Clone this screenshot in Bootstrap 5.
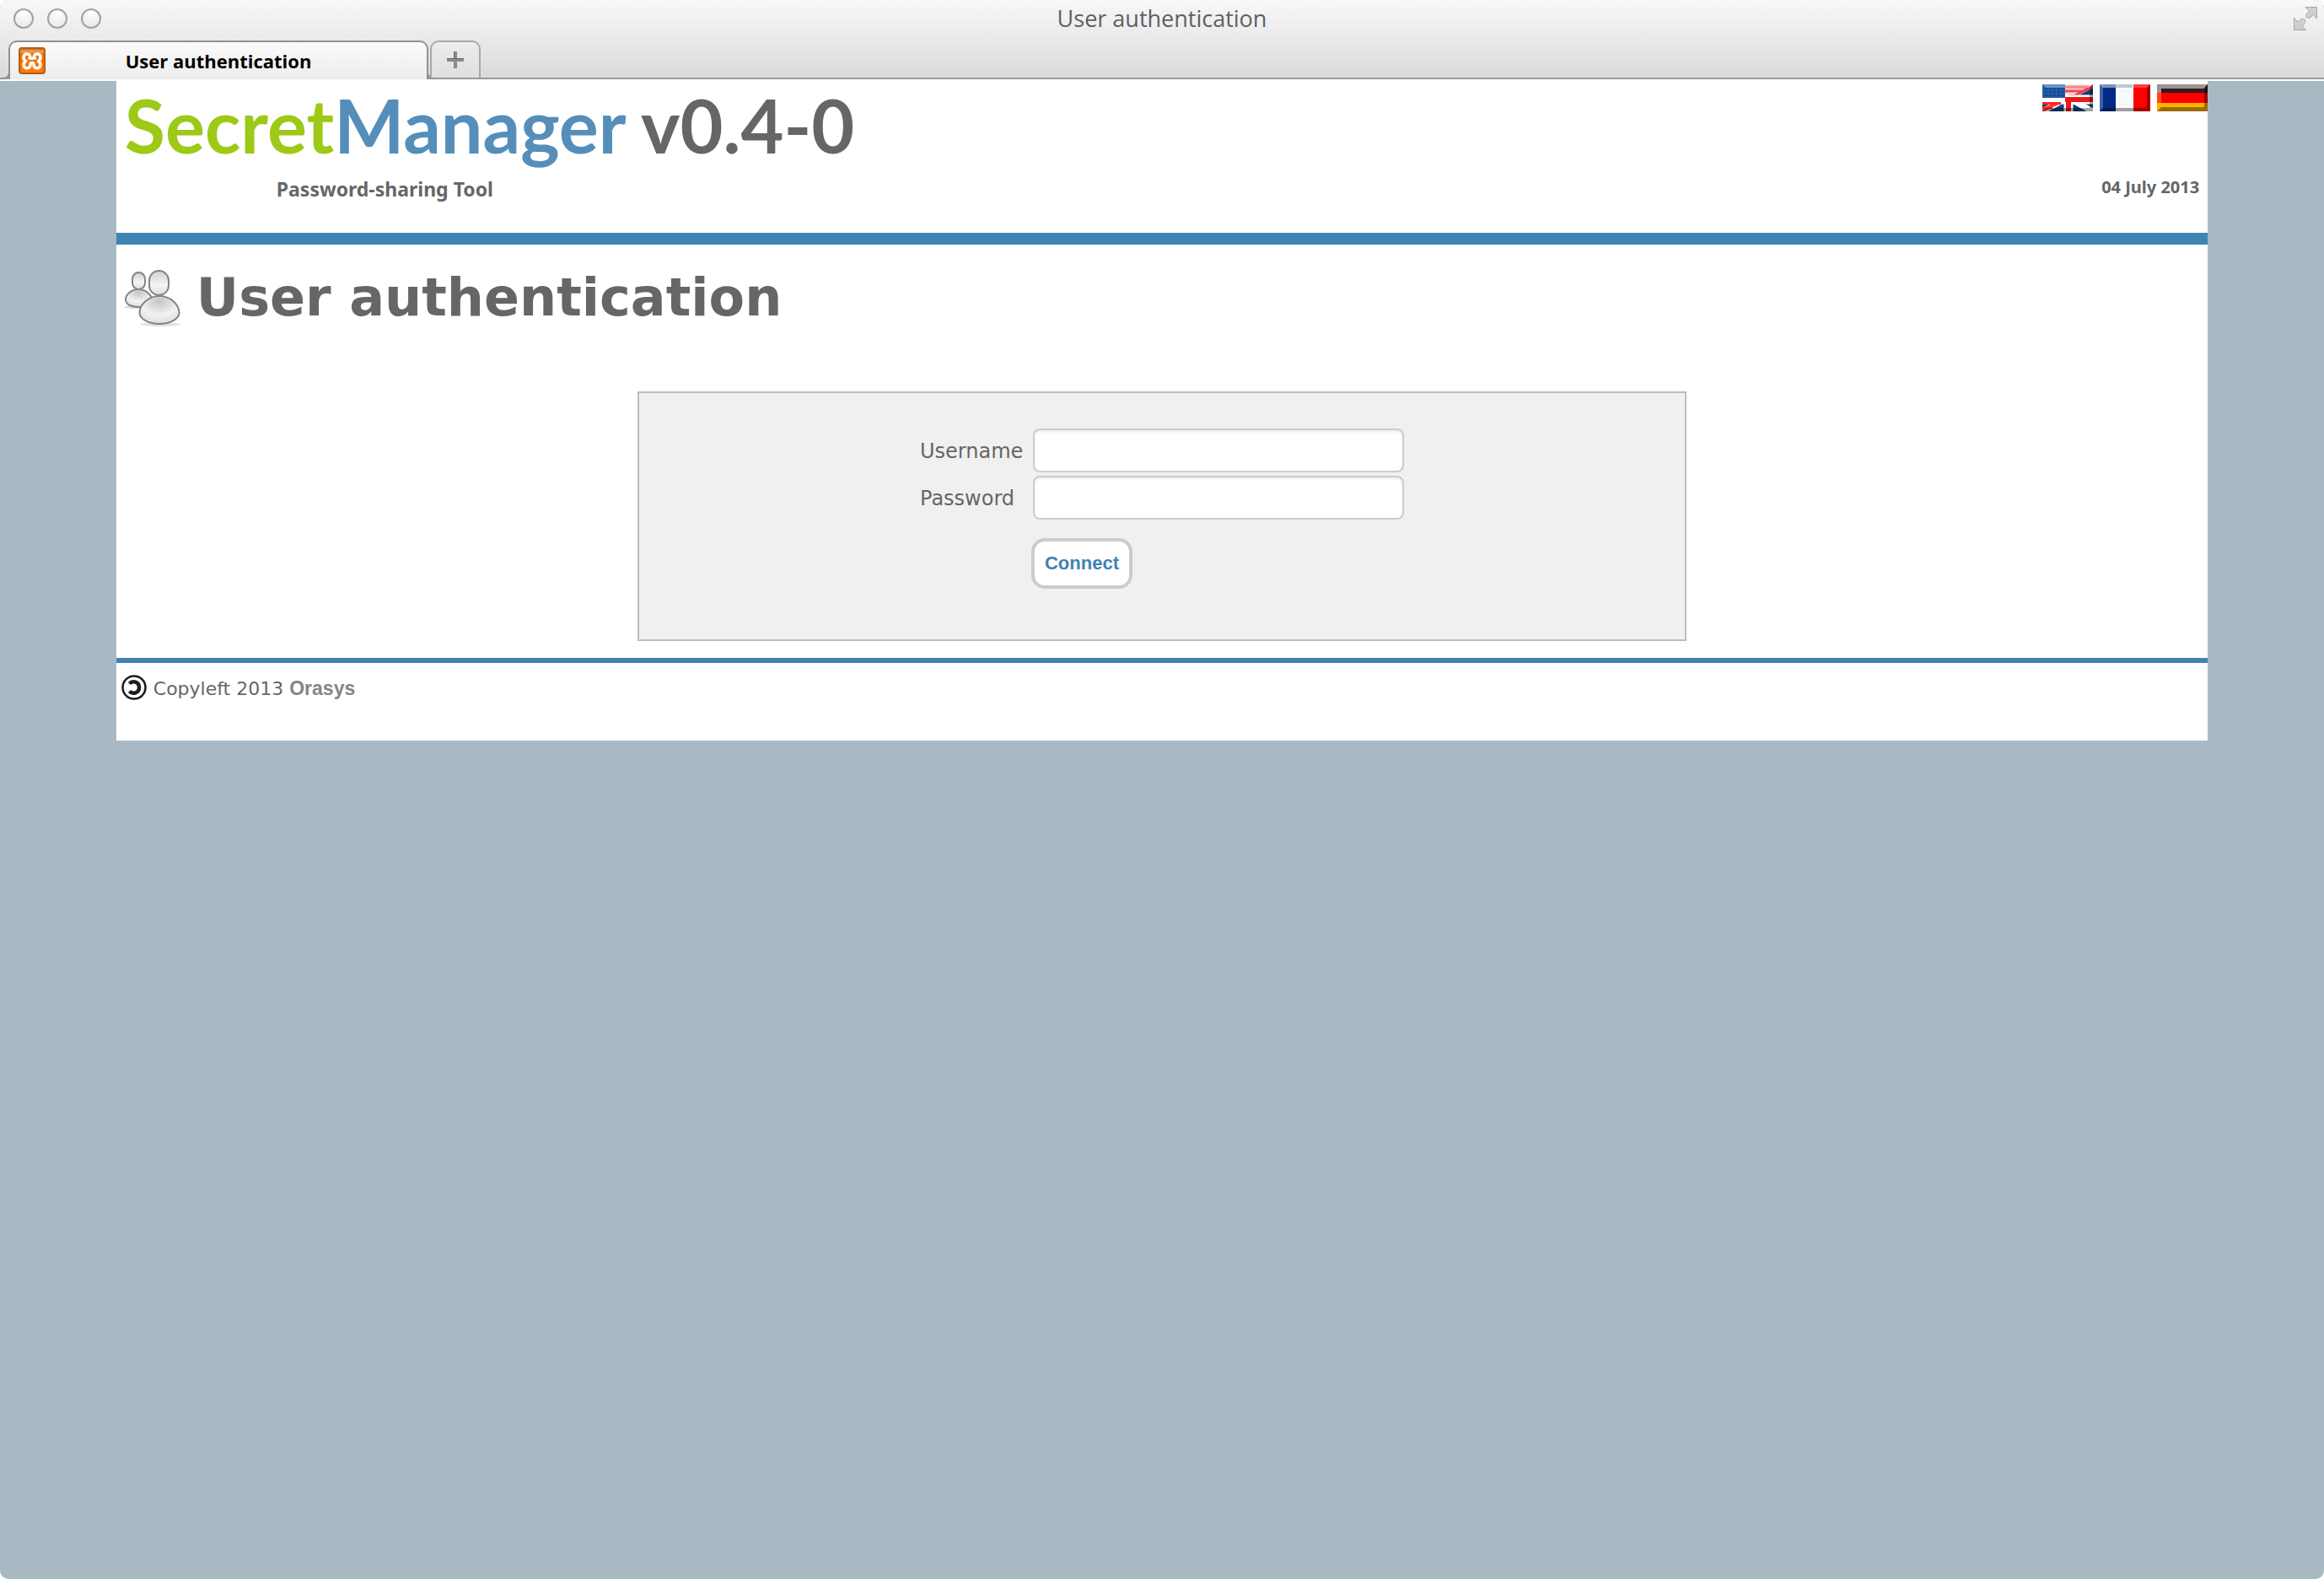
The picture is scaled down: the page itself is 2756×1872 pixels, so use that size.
<!DOCTYPE html>
<html lang="en">
<head>
<meta charset="utf-8">
<meta name="viewport" content="width=device-width, initial-scale=1">
<title>User authentication</title>
<link href="https://cdn.jsdelivr.net/npm/bootstrap@5.3.0/dist/css/bootstrap.min.css" rel="stylesheet">
<style>
  :root { --sm-blue: #3f83b3; --sm-text: #666; --sm-line: #ccc; }
  body { background: #fff; color: var(--sm-text); font-family: "DejaVu Sans", sans-serif; font-size: 24px; line-height: 32px; }
  a { text-decoration: none; }
  svg { display: block; flex: none; }

  /* browser window */
  .window-frame { border-radius: 10px; overflow: hidden; background: #a8b9c3; }
  .window-bar { height: 96px; background: linear-gradient(#f8f8f8, #e9e9e9 50%, #dadada 92px, #8f8f8f 92px, #a9a9a9 94px, #f6f6f6 94px, #fff); font-family: "Open Sans", sans-serif; }
  .title-row { height: 48px; padding: 0 8px 4px 16px; }
  .side-zone { flex: 1 1 0; }
  .dot-btn { width: 24px; height: 24px; padding: 0; border: 2px solid #a2a2a2; border-radius: 50%; background: radial-gradient(circle at 50% 20%, #fff, #f1f1f1 50%, #e6e6e6); }
  .window-title { color: #606060; font-size: 27px; line-height: 36px; }
  .expand-btn { padding: 0; border: 0; background: none; }
  .tab-strip { height: 48px; border: 0; padding-left: 10px; gap: 2px; flex-wrap: nowrap; }
  .tab-strip .nav-link { position: relative; border: 2px solid #929292; border-bottom: 0; border-radius: 10px 10px 0 0; margin: 0; padding: 0; color: #000; }
  .tab-strip .page-tab { width: 498px; height: 46px; padding: 0 10px; background: linear-gradient(#fbfbfb, #ececec); font-weight: 700; font-size: 22px; }
  .tab-strip .page-tab::before, .tab-strip .page-tab::after { content: ""; position: absolute; bottom: 0; width: 12px; height: 12px; border-bottom: 2px solid #929292; }
  .tab-strip .page-tab::before { left: -12px; border-right: 2px solid #929292; border-bottom-right-radius: 8px; }
  .tab-strip .page-tab::after { right: -12px; border-left: 2px solid #929292; border-bottom-left-radius: 8px; }
  .tab-strip .plus-tab { width: 60px; height: 44px; border-color: #a9a9a9; background: linear-gradient(#ececec, #dfdfdf); }
  .tab-label { padding-right: 32px; }

  /* page sheet */
  .sheet { width: 90%; background: #fff; }
  .site-head { border-bottom: 14px solid var(--sm-blue); min-height: 194px; }
  .brand-line { padding: 4px 0 0 10px; font-family: Lato, sans-serif; font-weight: 700; font-size: 88px; line-height: 96px; color: var(--sm-text); }
  .brand-green { color: #9dc917; }
  .brand-blue { color: #558eb9; }
  .tagline { margin: 10px 0 0 190px; font-family: "Noto Sans", sans-serif; font-weight: 700; font-size: 23px; line-height: 36px; }
  .flags { gap: 8px; padding-top: 4px; }
  .today { padding: 72px 10px 0 0; font-family: "Noto Sans", sans-serif; font-weight: 700; font-size: 20px; line-height: 36px; }
  .page-title { padding: 23px 10px 0; gap: 17px; }
  .page-title h1 { margin: 0; font-size: 62px; line-height: 80px; font-weight: 700; color: var(--sm-text); }
  .login-box { width: 50.16%; min-height: 296px; margin-top: 71px; padding: 42px 16px; background: #f0f0f0; border: 2px solid #bdbdbd; }
  .login-row { width: 578px; margin-bottom: 4px; padding-left: 2px; }
  .login-row label { width: 134px; padding-top: 2px; }
  .login-row .form-control { width: 440px; height: 52px; padding: 4px 10px; font-size: 24px; border: 2px solid var(--sm-line); border-radius: 8px; box-shadow: inset 0 2px 3px rgba(0,0,0,.08); }
  .connect-row { width: 578px; padding: 18px 0 0 134px; }
  .btn-connect { height: 60px; width: 120px; padding: 0; background: #fff; color: var(--sm-blue); border: 4px solid var(--sm-line); border-radius: 16px; font-family: "Liberation Sans", Arial, sans-serif; font-weight: 700; font-size: 22px; line-height: 32px; }
  .site-foot { margin-top: 20px; padding: 14px 6px 0; min-height: 98px; border-top: 6px solid var(--sm-blue); font-size: 22px; line-height: 32px; gap: 8px; }
  .site-foot a { color: #858585; font-family: "Liberation Sans", Arial, sans-serif; font-weight: 700; font-size: 23px; }
</style>
</head>
<body>
<div class="window-frame min-vh-100 d-flex flex-column">
  <header class="window-bar">
    <div class="title-row d-flex align-items-center">
      <div class="side-zone d-flex gap-3">
        <button type="button" class="dot-btn" aria-label="Close"></button>
        <button type="button" class="dot-btn" aria-label="Minimize"></button>
        <button type="button" class="dot-btn" aria-label="Zoom"></button>
      </div>
      <div class="window-title pe-2">User authentication</div>
      <div class="side-zone d-flex justify-content-end">
        <button type="button" class="expand-btn" aria-label="Full screen">
          <svg width="28" height="28" viewBox="0 0 28 28" fill="#cfcfcf" stroke="#a6a6a6" stroke-width="1"><path d="M14 .5h13.500v13.500l-4.500-4.500c-3 3.500-5 4.500-7.500 3.500-2-1.500-1-4.500 3-8z"/><path d="M.5 13.500v14h14l-4.500-4.500c4-3.500 4.500-6 3-8-2-1.500-5-.5-8 3z"/></svg>
        </button>
      </div>
    </div>
    <nav class="nav nav-tabs tab-strip" aria-label="Tabs">
      <a href="#" class="nav-link page-tab d-flex align-items-center" aria-current="page">
        <svg width="32" height="32" viewBox="0 0 32 32"><defs><linearGradient id="xo" x2="0" y2="1"><stop offset="0" stop-color="#c86516"/><stop offset=".14" stop-color="#f0a060"/><stop offset=".24" stop-color="#ee7003"/><stop offset="1" stop-color="#fb7d07"/></linearGradient></defs><rect x="1" y="1" width="30" height="30" rx="3" fill="url(#xo)" stroke="#bb5a10" stroke-width="2"/><path d="M13 13h6.500M13.500 13V11c0-4-7.500-4-7.500.5 0 2.500 1 4 2.500 5-1.500 1-2.500 2.500-2.500 4.500 0 5 8 5 8 0 0-1.500.5-2.500 2-2.500s2 1 2 2.500c0 5 8 5 8 0 0-2-1-3.500-2.500-4.500 1.500-1 2.500-2.500 2.500-5 0-4.500-7.500-4.500-7.500-.5v2" fill="none" stroke="#fff" stroke-width="3.600" stroke-linecap="round" stroke-linejoin="round"/></svg>
        <span class="tab-label flex-grow-1 text-center">User authentication</span>
      </a>
      <a href="#" class="nav-link plus-tab d-flex align-items-center justify-content-center" aria-label="New tab">
        <svg width="20" height="20" viewBox="0 0 20 20"><path d="M8 0h4v8h8v4h-8v8H8v-8H0V8h8z" fill="#8b8b8b"/><path d="M0 8.500h20M8.500 0v8" stroke="#666" fill="none"/></svg>
      </a>
    </nav>
  </header>

  <div class="sheet mx-auto">
    <div class="site-head d-flex justify-content-between">
      <div>
        <div class="brand-line"><span class="brand-green">Secret</span><span class="brand-blue">Manager</span> v0.4-0</div>
        <p class="tagline">Password-sharing Tool</p>
      </div>
      <div class="d-flex flex-column align-items-end">
        <div class="flags d-flex">
          <a href="#" aria-label="English"><svg width="60" height="32" viewBox="0 0 60 32"><path fill="#123f80" d="M0 0h60v32H0z"/><path d="M0 0 60 32M60 0 0 32" stroke="#fff" stroke-width="7"/><path d="M26 15 56 0h4v4L36 16zM0 28l22-9h8L2 32H0z" fill="#f33"/><path d="M27 0h33l-22 12H27z" fill="#f9d9dc"/><path d="M27 3h28M27 8h22" stroke="#f04a50" stroke-width="3"/><path d="M0 18h60M31 14v18" stroke="#fff" stroke-width="11"/><path d="M0 22.500h22M0 28h12" stroke="#f22" stroke-width="3"/><path d="M27 18h33M31 15v17" stroke="#f01818" stroke-width="6"/><path fill="#215aa6" d="M0 0h27v16H0z"/><path d="M3 5h22M3 9h22M3 13h22" stroke="#13468f" stroke-width="2" stroke-dasharray="3 2"/><path fill="#fff" opacity=".35" d="M0 0h60l-4 4H4z"/><path opacity=".35" d="M0 32h60V0l-4 4v24H4z"/></svg></a>
          <a href="#" aria-label="Français"><svg width="60" height="32" viewBox="0 0 60 32"><path fill="#002b87" d="M0 0h20v32H0z"/><path fill="#f6fbfd" d="M19 0h21v32H19z"/><path fill="#fe0000" d="M40 0h20v32H40z"/><path fill="#fff" opacity=".25" d="M0 0h4v28l-4 4z"/><path fill="#aab6c8" opacity=".75" d="M0 0h39v4H4z"/><path fill="#f66" opacity=".6" d="M40 0h20l-4 4H40z"/><path opacity=".36" d="M60 0v32H0l4-4h52V4z"/><path d="M24 8h12M26 24h9" stroke="#f5d9de" stroke-width="1" stroke-dasharray="2 3"/></svg></a>
          <a href="#" aria-label="Deutsch"><svg width="60" height="32" viewBox="0 0 60 32"><path fill="#35191c" d="M0 0h60v11H0z"/><path fill="#fe0000" d="M0 10h60v12H0z"/><path fill="#ffb400" d="M0 22h60v10H0z"/><path fill="#ddd" opacity=".62" d="M0 0h60l-4 5H5v5H0z"/><path fill="#ff7a20" opacity=".6" d="M0 10h5v12H0z"/><path opacity=".4" d="M60 0v32H0l5-5h51V4z"/></svg></a>
        </div>
        <div class="today">04 July 2013</div>
      </div>
    </div>

    <main>
      <div class="page-title d-flex align-items-center">
        <svg width="68" height="68" viewBox="0 0 68 68"><defs><linearGradient id="ug" x2="0" y2="1"><stop offset="0" stop-color="#d2d2d2"/><stop offset=".6" stop-color="#f4f4f4"/><stop offset="1" stop-color="#dedede"/></linearGradient><radialGradient id="ub" cx=".5" cy=".2" r=".8"><stop offset="0" stop-color="#c4c4c4"/><stop offset=".6" stop-color="#f3f3f3"/><stop offset="1" stop-color="#ddd"/></radialGradient></defs><ellipse cx="16" cy="45" rx="17" ry="2" fill="#ddd"/><ellipse cx="42" cy="65.500" rx="24" ry="2.500" fill="#e2e2e2"/><g stroke="#858585" stroke-width="2"><path d="M16 24c8 0 16 6 16 13 0 5-8 8-16 8S1 42 1 36s7-12 15-12z" fill="url(#ub)"/><rect x="9" y="4" width="15" height="20" rx="7.500" fill="url(#ug)"/><path d="M41 32c13 0 23.500 10 23.500 20 0 7-11 13-23.500 13s-23.500-6-23.500-13c0-10 10.500-20 23.500-20z" fill="url(#ub)"/><rect x="29" y="2" width="23" height="29" rx="11.500" fill="url(#ug)"/></g></svg>
        <h1>User authentication</h1>
      </div>

      <form class="login-box mx-auto d-flex flex-column align-items-center" action="#">
        <div class="login-row d-flex align-items-center">
          <label for="username">Username</label>
          <input type="text" class="form-control" id="username">
        </div>
        <div class="login-row d-flex align-items-center">
          <label for="password">Password</label>
          <input type="password" class="form-control" id="password">
        </div>
        <div class="connect-row">
          <button type="submit" class="btn btn-connect">Connect</button>
        </div>
      </form>
    </main>

    <footer class="site-foot d-flex align-items-start">
      <svg width="30" height="30" viewBox="0 0 30 30" fill="none" stroke="#1c1c1c"><circle cx="15" cy="15" r="13.500" stroke-width="2.500"/><path d="M9.500 10.500C13 6.500 21 8 21 15s-8 8.500-11.500 4.500" stroke-width="4.500"/></svg>
      <div>Copyleft 2013 <a href="#">Orasys</a></div>
    </footer>
  </div>
</div>
<script src="https://cdn.jsdelivr.net/npm/bootstrap@5.3.0/dist/js/bootstrap.bundle.min.js"></script>
</body>
</html>
